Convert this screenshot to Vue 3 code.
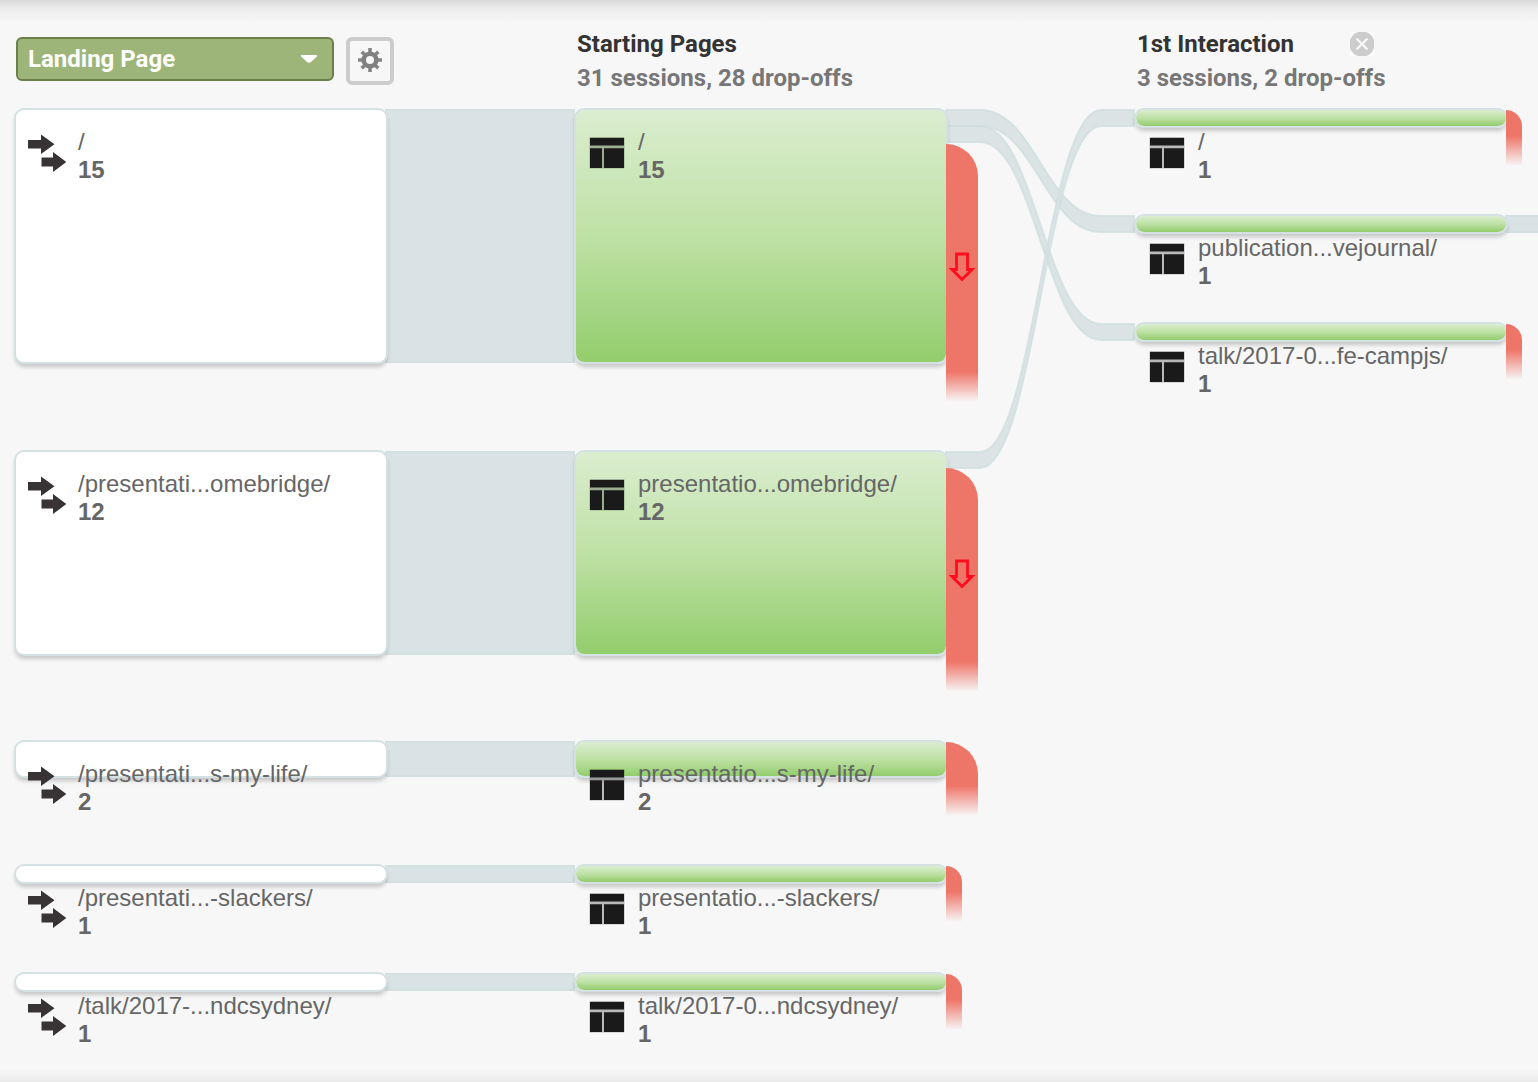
<script setup>
import { ref } from 'vue'

const dimension = ref('Landing Page')

const NODE_WIDTH = 374
const columnX = [14, 574, 1134]

const columns = [
  {
    kind: 'source',
    nodes: [
      { label: '/', count: 15, y: 8, h: 256 },
      { label: '/presentati...omebridge/', count: 12, y: 350, h: 206 },
      { label: '/presentati...s-my-life/', count: 2, y: 640, h: 38 },
      { label: '/presentati...-slackers/', count: 1, y: 764, h: 20 },
      { label: '/talk/2017-...ndcsydney/', count: 1, y: 872, h: 20 }
    ]
  },
  {
    kind: 'page',
    nodes: [
      { label: '/', count: 15, y: 8, h: 256, drop: { top: 36, h: 258, w: 32, arrow: true } },
      { label: 'presentatio...omebridge/', count: 12, y: 350, h: 206, drop: { top: 18, h: 224, w: 32, arrow: true } },
      { label: 'presentatio...s-my-life/', count: 2, y: 640, h: 38, drop: { top: 2, h: 74, w: 32 } },
      { label: 'presentatio...-slackers/', count: 1, y: 764, h: 20, drop: { top: 2, h: 56, w: 16 } },
      { label: 'talk/2017-0...ndcsydney/', count: 1, y: 872, h: 20, drop: { top: 2, h: 56, w: 16 } }
    ]
  },
  {
    kind: 'page',
    nodes: [
      { label: '/', count: 1, y: 8, h: 20, drop: { top: 2, h: 56, w: 16 } },
      { label: 'publication...vejournal/', count: 1, y: 114, h: 20 },
      { label: 'talk/2017-0...fe-campjs/', count: 1, y: 222, h: 20, drop: { top: 2, h: 56, w: 16 } }
    ]
  }
]

const straightLinks = columns[0].nodes.map((n) => ({ x: 385, y: n.y + 1, w: 190, h: n.h - 2 }))
straightLinks.push({ x: 1505, y: 115, w: 400, h: 18 })

// Ribbon between the second and third column
function ribbon(y1, y2, t) {
  const a = 946, b = 980, c = 1101, d = 1134, k = 55
  return `M${a} ${y1}H${b}C${b + k} ${y1} ${c - k} ${y2} ${c} ${y2}H${d}V${y2 + t}H${c}` +
    `C${c - k} ${y2 + t} ${b + k} ${y1 + t} ${b} ${y1 + t}H${a}Z`
}
const ribbons = [ribbon(10, 116, 16), ribbon(26, 224, 16), ribbon(352, 10, 16)]

const nodeStyle = (col, n) => ({ left: columnX[col] + 'px', top: n.y + 'px', width: NODE_WIDTH + 'px', height: n.h + 'px' })
const dropStyle = (col, n) => ({
  left: columnX[col] + NODE_WIDTH - 2 + 'px',
  top: n.y + n.drop.top + 'px',
  width: n.drop.w + 'px',
  height: n.drop.h + 'px',
  borderTopRightRadius: n.drop.w + 'px'
})
</script>

<template>
  <main class="flow">
    <header class="head">
      <div class="controls">
        <div class="picker">
          <select v-model="dimension" aria-label="Dimension">
            <option>Landing Page</option>
          </select>
          <svg class="caret" width="16" height="8" viewBox="0 0 16 8" aria-hidden="true"><path d="M0 0h16v1.500l-6 5.500q-2 1.600-4 0l-6-5.500z" fill="#fff" /></svg>
        </div>
        <button class="gear" type="button" aria-label="Settings">
          <svg width="24" height="24" viewBox="0 0 24 24" aria-hidden="true">
            <g stroke="#858585" stroke-width="3.600">
              <path d="M12 0v24M0 12h24M3.700 3.700l16.600 16.600M20.300 3.700L3.700 20.300" />
            </g>
            <circle cx="12" cy="12" r="8.600" fill="#808080" />
            <circle cx="12" cy="12" r="4" fill="#f7f7f7" />
          </svg>
        </button>
      </div>
      <div class="step">
        <h2>Starting Pages</h2>
        <p>31 sessions, 28 drop-offs</p>
      </div>
      <div class="step">
        <div class="title-row">
          <h2>1st Interaction</h2>
          <button class="close" type="button" aria-label="Remove step">
            <svg width="24" height="24" viewBox="0 0 24 24" aria-hidden="true">
              <path d="M0 0h24v24H0z" fill="#fcfcfc" />
              <circle cx="12" cy="12" r="12.600" fill="#ccc" />
              <path d="M6.500 6.500l11 11M17.500 6.500l-11 11" stroke="#f7f7f7" stroke-width="2.400" />
            </svg>
          </button>
        </div>
        <p>3 sessions, 2 drop-offs</p>
      </div>
    </header>

    <section class="canvas" aria-label="Behavior flow">
      <svg class="links" aria-hidden="true">
        <g v-for="(l, i) in straightLinks" :key="'s' + i">
          <rect :x="l.x" :y="l.y" :width="l.w" :height="l.h" fill="#d3e0e1" />
          <rect :x="l.x" :y="l.y + 2" :width="l.w - 2" :height="l.h - 4" fill="#d9e2e4" />
        </g>
        <path v-for="(d, i) in ribbons" :key="'r' + i" :d="d" fill="#d7e0e2" fill-opacity=".9" stroke="#cfdfdf" stroke-opacity=".8" stroke-width="2" />
      </svg>

      <template v-for="(col, c) in columns" :key="c">
        <article v-for="n in col.nodes" :key="n.label" class="node" :class="col.kind" :style="nodeStyle(c, n)">
          <div class="label">
            <svg v-if="col.kind === 'source'" class="icon" viewBox="0 0 40 40" aria-hidden="true">
              <path d="M2 8h13V2.500L28.500 12.300 15 22v-5.500H2zM15.500 25.500H27V20l13.500 10L27 40v-5.500H15.500z" fill="#383334" />
            </svg>
            <svg v-else class="icon" viewBox="0 0 40 40" aria-hidden="true">
              <rect x="3.500" y="5" width="35" height="31.500" rx="1" fill="#000" fill-opacity=".25" />
              <path d="M4 6h34v7.500H4zM4 16.300h12V36H4zM18 16.300h20V36H18z" fill="#1a1a1a" />
            </svg>
            <div class="text">
              <span>{{ n.label }}</span>
              <strong>{{ n.count }}</strong>
            </div>
          </div>
        </article>
        <template v-for="n in col.nodes" :key="'d' + n.label">
          <div v-if="n.drop" class="drop" :style="dropStyle(c, n)">
            <svg v-if="n.drop.arrow" width="26" height="30" viewBox="0 0 26 30" aria-hidden="true">
              <path d="M7.500 2h11v15.500h4.500L13 27.500 3 17.500h4.500z" fill="none" stroke="#ff0d1c" stroke-width="2.800" />
            </svg>
          </div>
        </template>
      </template>
    </section>
  </main>
</template>

<style>
body {
  margin: 0;
  background: #f7f7f7;
}
</style>

<style scoped>
.flow {
  display: flex;
  flex-direction: column;
  min-height: 100vh;
  overflow: hidden;
  font-family: "Liberation Sans", Arial, sans-serif;
  font-size: 24px;
  color: #666;
  background:
    linear-gradient(#d8d8d8, #ececec 8px, #f7f7f7 22px, transparent 22px),
    linear-gradient(to top, #ebebeb, #f7f7f7 14px);
}

.head {
  display: grid;
  grid-template-columns: 561px 560px 1fr;
  height: 73px;
  padding: 27px 0 0 16px;
  font-family: Roboto, sans-serif;
  font-weight: 700;
  line-height: 34px;
}

.controls {
  display: flex;
  align-items: flex-start;
  gap: 12px;
  padding-top: 10px;
}

.picker {
  position: relative;
}

.picker select {
  appearance: none;
  display: block;
  width: 318px;
  height: 44px;
  padding: 0 10px;
  border: 2px solid #6b8048;
  border-radius: 6px;
  background: #9db578;
  color: #fff;
  font: inherit;
}

.caret {
  position: absolute;
  right: 17px;
  top: 18px;
  pointer-events: none;
}

button {
  padding: 0;
  cursor: pointer;
}

.gear {
  display: flex;
  align-items: center;
  justify-content: center;
  box-sizing: border-box;
  width: 48px;
  height: 48px;
  padding-bottom: 2px;
  border: 4px solid #ccc;
  border-radius: 6px;
  background: #f7f7f7;
}

.step h2,
.step p {
  margin: 0;
  font-size: 24px;
  white-space: nowrap;
}

.step h2 {
  color: #333;
}

.step p {
  color: #777;
}

.title-row {
  display: flex;
  align-items: center;
  gap: 56px;
}

.close {
  display: flex;
  border: 0;
  background: none;
}

.canvas {
  position: relative;
  flex: 1;
  min-height: 960px;
}

.links {
  position: absolute;
  top: 0;
  left: 0;
  width: 100%;
  height: 100%;
  overflow: visible;
}

.node {
  position: absolute;
  box-sizing: border-box;
  border: 2px solid #d4e1e3;
  border-radius: 10px;
  box-shadow: 0 4px 4px -1px rgba(0, 0, 0, 0.2);
}

.node.source {
  background: #fff;
}

.node.page {
  background: linear-gradient(#dbedcf, #bee1a5 50%, #93cd6c) padding-box;
}

.label {
  display: flex;
  gap: 12px;
  padding: 18px 10px 0;
}

.icon {
  flex: none;
  width: 40px;
  height: 40px;
  margin-top: 4px;
}

.text {
  display: flex;
  flex-direction: column;
  line-height: 28px;
  white-space: nowrap;
}

.drop {
  position: absolute;
  display: flex;
  align-items: center;
  justify-content: center;
  box-sizing: border-box;
  padding-bottom: 12px;
  background: linear-gradient(to top, rgba(238, 118, 105, 0), #ee7669 30px);
}
</style>
